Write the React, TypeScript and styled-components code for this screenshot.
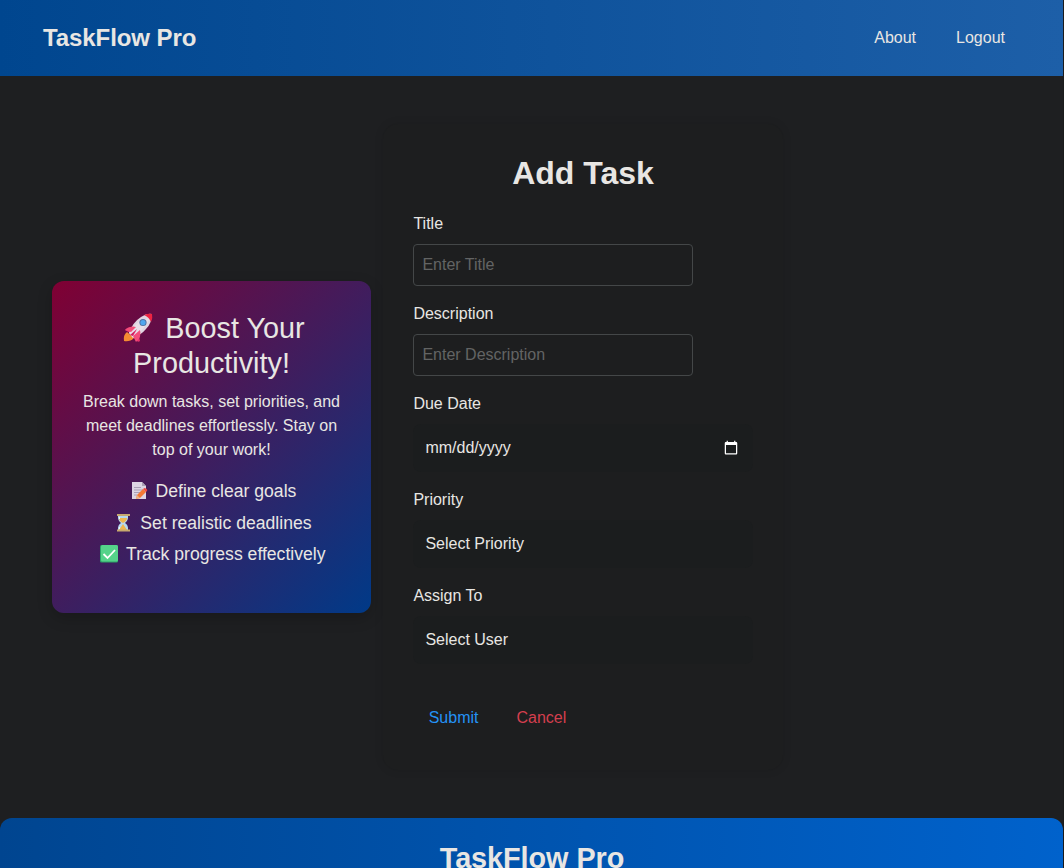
import React from 'react';
import styled, { createGlobalStyle } from 'styled-components';

const GlobalStyle = createGlobalStyle`
  *, *::before, *::after { box-sizing: border-box; }
  html { background: #1a1b1c; height: 100%; overflow: hidden; }
  body {
    margin: 0;
    height: 868px;
    overflow: hidden;
    color: #e8e6e3;
    font: 16px/1.5 "Liberation Sans", Arial, sans-serif;
  }
`;

const Page = styled.div`
  width: 1063px;
  height: 868px;
  overflow: hidden;
  background: #1e1f21;
`;

const Navbar = styled.header`
  display: flex;
  align-items: center;
  justify-content: space-between;
  height: 76px;
  padding: 0 58px 0 43px;
  background: linear-gradient(90deg, #00468f, #1d5fa8);
`;

const Brand = styled.div`
  font-size: 24px;
  font-weight: 700;
  letter-spacing: -0.08px;
`;

const NavLinks = styled.nav`
  display: flex;
  gap: 40px;
`;

const NavLink = styled.a`
  color: inherit;
  text-decoration: none;
`;

const Main = styled.main`
  display: flex;
  align-items: center;
  gap: 12px;
  height: 742px;
  padding: 48px 52px;
`;

const Promo = styled.section`
  width: 319px;
  height: 332px;
  padding: 30px;
  border-radius: 12px;
  background: linear-gradient(135deg, #800033, #003a88);
  box-shadow: 0 5px 15px rgba(0, 0, 0, 0.2);
  text-align: center;
`;

const PromoTitle = styled.h2`
  margin: 0 0 10px;
  font-size: 28.8px;
  font-weight: 400;
  line-height: 34.56px;
`;

const PromoText = styled.p`
  margin: 0 -4px 16px;
`;

const Tips = styled.ul`
  margin: 0;
  padding: 0;
  list-style: none;
  font-size: 17.6px;
`;

const Tip = styled.li`
  height: 26.4px;
  margin-bottom: 5px;
  white-space: nowrap;
`;

const RocketIcon = styled.svg`
  width: 30px;
  height: 30px;
  margin: 0 4px 0 5px;
  vertical-align: -5px;
`;

const TipIcon = styled.svg`
  width: 18px;
  height: 18px;
  margin: 0 3px;
  vertical-align: -3px;
`;

const FormCard = styled.form`
  width: 400px;
  height: 646px;
  padding: 30px;
  border-radius: 15px;
  background: #1d1e1f;
  box-shadow: 0 0 10px rgba(0, 0, 0, 0.1);
`;

const FormTitle = styled.h1`
  margin: 0 0 20px;
  font-size: 32px;
  line-height: 38.4px;
  text-align: center;
`;

const Field = styled.div`
  margin-bottom: 16px;
`;

const Label = styled.label`
  display: block;
  margin-bottom: 8px;
  padding-left: 0.4px;
`;

const TextInput = styled.input`
  display: block;
  width: 280px;
  height: 42px;
  padding: 8px 8px 8px 8.4px;
  border: 1px solid #444748;
  border-radius: 4px;
  background: transparent;
  color: inherit;
  font: inherit;
  &::placeholder { color: #636464; opacity: 1; }
`;

const DateInput = styled.input`
  display: block;
  width: 340px;
  height: 48px;
  padding: 12px 12px 12px 12.4px;
  border: 0;
  border-radius: 8px;
  background: #1b1d1e;
  color: inherit;
  color-scheme: dark;
  font: inherit;
  &::-webkit-datetime-edit-text,
  &::-webkit-datetime-edit-month-field,
  &::-webkit-datetime-edit-day-field,
  &::-webkit-datetime-edit-year-field {
    padding: 0;
  }
`;

const Select = styled.select`
  display: block;
  width: 340px;
  height: 48px;
  padding: 12px 12px 12px 12.4px;
  border: 0;
  border-radius: 8px;
  appearance: none;
  background: #1b1d1e;
  color: inherit;
  font: inherit;
`;

const Actions = styled.div`
  display: flex;
  gap: 6px;
  padding-top: 19px;
`;

const ActionButton = styled.button<{ $tone: string }>`
  height: 38px;
  padding: 0 16.3px 0 15.7px;
  border: 0;
  background: transparent;
  color: ${(p) => p.$tone};
  font: inherit;
`;

const Footer = styled.footer`
  height: 50px;
  padding: 20px 0 0 1px;
  border-radius: 12px 12px 0 0;
  background: linear-gradient(90deg, #004590, #0062cc);
  text-align: center;
`;

const FooterBrand = styled.div`
  font-size: 28.8px;
  font-weight: 700;
  line-height: 41px;
  letter-spacing: -0.05px;
`;

const Rocket = () => (
  <RocketIcon viewBox="0 0 30 30" aria-hidden="true">
    <path d="M1 28Q0 22 4 19L11 25Q7 29 1 28Z" fill="#f58b32" />
    <path d="M2 17Q5 13 13 14L15 19L17 28Q15 30 13 27L10 23L7 20Z" fill="#e8316c" />
    <path d="M6 20Q10 9 18 4Q24 0 29 1Q29 10 23 16Q18 22 10 25Z" fill="#dfd5e1" />
    <path d="M6 20Q10 13 18 7L27 5Q22 16 10 25Z" fill="#eee5ec" opacity=".65" />
    <path d="M21 2Q26 0 29 1Q30 5 28 9Q26 4 21 2Z" fill="#ed2442" />
    <circle cx="20" cy="9.5" r="3.6" fill="#4d72a4" />
    <circle cx="20" cy="9.5" r="2.6" fill="#4fa6ef" />
    <path d="M2 17Q8 12 13 14L8 19Z M10 23L17 17Q19 24 13 29Z" fill="#f34d7b" />
    <path d="M7 22L14 16L10 23Z" fill="#d51e60" />
  </RocketIcon>
);

const Memo = () => (
  <TipIcon viewBox="0 0 18 18" aria-hidden="true">
    <path d="M2 0H12L16 4V17H2Z" fill="#ddd5e4" />
    <path d="M12 0V4H16Z" fill="#aaa0b4" />
    <path d="M4 5.5H11M4 8H13M4 10.5H10M4 13H7" stroke="#a99fb6" />
    <path d="M6 17L7 13L13 7L16 10L10 16Z" fill="#f47935" />
    <path d="M13 7L14.5 6Q18 7 17 9L16 10Z" fill="#ed4b45" />
    <path d="M6 17L7 13L10 16Z" fill="#e9b189" />
  </TipIcon>
);

const Hourglass = () => (
  <TipIcon viewBox="0 0 18 18" aria-hidden="true">
    <path d="M4 1.5H14Q14.5 6.5 11 9Q14.5 11 14 16H4Q3.500 11 7 9Q3.500 6.500 4 1.500Z" fill="#b6d9ee" />
    <path d="M5 4H13Q13 7 9 9Q5 7 5 4ZM9 10L13 16H5Z" fill="#efb64f" />
    <path d="M3 0H16V2H3ZM3 15.500H16V17.500H3Z" fill="#c7a96e" />
    <path d="M5.5 3V5M5.5 13V15" stroke="#f0f5f7" />
  </TipIcon>
);

const Check = () => (
  <TipIcon viewBox="0 0 18 18" aria-hidden="true">
    <rect width="18" height="17.5" rx="1.5" fill="#2aa567" />
    <rect x="1" y="0" width="17" height="16.5" rx="1.5" fill="#55d38a" />
    <path d="M3.5 9L7.5 13L15 5" fill="none" stroke="#fff" strokeWidth="1.8" />
  </TipIcon>
);

export default function App() {
  return (
    <>
      <GlobalStyle />
      <Page>
        <Navbar>
          <Brand>TaskFlow Pro</Brand>
          <NavLinks>
            <NavLink>About</NavLink>
            <NavLink>Logout</NavLink>
          </NavLinks>
        </Navbar>
        <Main>
          <Promo>
            <PromoTitle><Rocket /> Boost Your Productivity!</PromoTitle>
            <PromoText>
              Break down tasks, set priorities, and meet deadlines effortlessly. Stay on top of your work!
            </PromoText>
            <Tips>
              <Tip><Memo /> Define clear goals</Tip>
              <Tip><Hourglass /> Set realistic deadlines</Tip>
              <Tip><Check /> Track progress effectively</Tip>
            </Tips>
          </Promo>
          <FormCard>
            <FormTitle>Add Task</FormTitle>
            <Field>
              <Label htmlFor="title">Title</Label>
              <TextInput id="title" placeholder="Enter Title" />
            </Field>
            <Field>
              <Label htmlFor="description">Description</Label>
              <TextInput id="description" placeholder="Enter Description" />
            </Field>
            <Field>
              <Label htmlFor="due">Due Date</Label>
              <DateInput id="due" type="date" />
            </Field>
            <Field>
              <Label htmlFor="priority">Priority</Label>
              <Select id="priority"><option>Select Priority</option></Select>
            </Field>
            <Field>
              <Label htmlFor="assignee">Assign To</Label>
              <Select id="assignee"><option>Select User</option></Select>
            </Field>
            <Actions>
              <ActionButton type="button" $tone="#2492f5">Submit</ActionButton>
              <ActionButton type="button" $tone="#d43f4e">Cancel</ActionButton>
            </Actions>
          </FormCard>
        </Main>
        <Footer>
          <FooterBrand>TaskFlow Pro</FooterBrand>
        </Footer>
      </Page>
    </>
  );
}
